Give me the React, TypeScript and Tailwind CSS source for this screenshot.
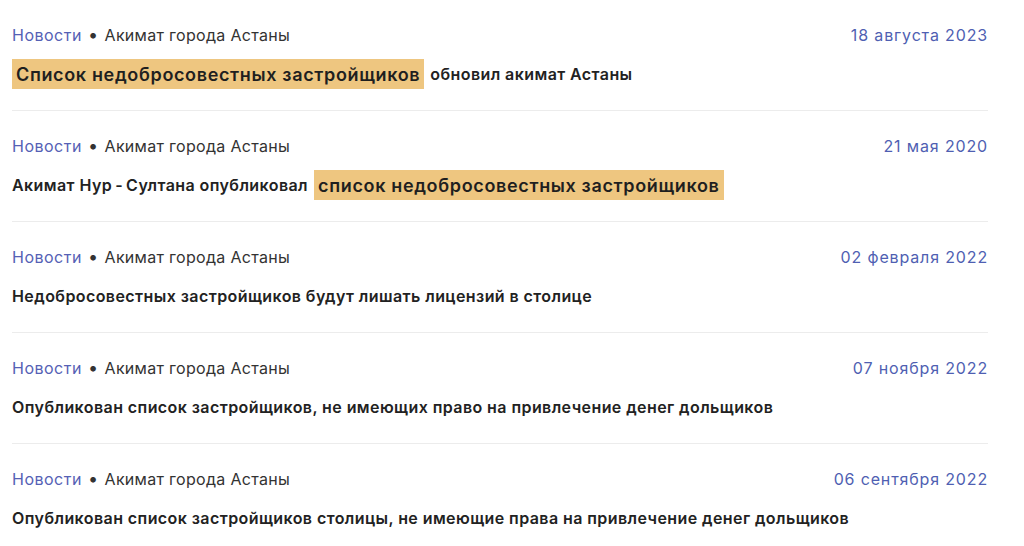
const items = [
  {
    date: '18 августа 2023',
    title: [
      { text: 'Список недобросовестных застройщиков', mark: true },
      { text: 'обновил акимат Астаны' },
    ],
  },
  {
    date: '21 мая 2020',
    title: [
      { text: 'Акимат Нур\u2009-\u2009Султана опубликовал' },
      { text: 'список недобросовестных застройщиков', mark: true },
    ],
  },
  {
    date: '02 февраля 2022',
    title: [{ text: 'Недобросовестных застройщиков будут лишать лицензий в столице' }],
  },
  {
    date: '07 ноября 2022',
    title: [{ text: 'Опубликован список застройщиков, не имеющих право на привлечение денег дольщиков' }],
  },
  {
    date: '06 сентября 2022',
    title: [{ text: 'Опубликован список застройщиков столицы, не имеющие права на привлечение денег дольщиков' }],
  },
]

export default function App() {
  return (
    <div className="w-[1024px] h-[546px] overflow-hidden bg-white pl-3 pr-9 font-['Inter',sans-serif]">
      {items.map((item, i) => (
        <div key={i} className="pt-[23px] pb-[21px] border-b border-[#ececec]">
          <div className="flex items-center justify-between h-6 text-[16px]">
            <div className="text-[#333] tracking-[0.5px]">
              <span className="text-[#5561b5]">Новости</span>
              <span className="mx-[6px] text-[18px] leading-none">•</span>
              <span className="tracking-[0.3px]">Акимат города Астаны</span>
            </div>
            <div className="text-[#4f5fb2] tracking-[0.85px]">{item.date}</div>
          </div>
          <div className="mt-3 h-[30px] flex items-center gap-[6px] font-semibold text-[#222]">
            {item.title.map((t, j) =>
              t.mark ? (
                <span key={j} className="h-[30px] flex items-center px-[4px] bg-[#eec680] text-[18px] tracking-[0.65px] text-[#1f1f1f]">
                  {t.text}
                </span>
              ) : (
                <span key={j} className="text-[16px] tracking-[0.42px]">{t.text}</span>
              )
            )}
          </div>
        </div>
      ))}
    </div>
  )
}
